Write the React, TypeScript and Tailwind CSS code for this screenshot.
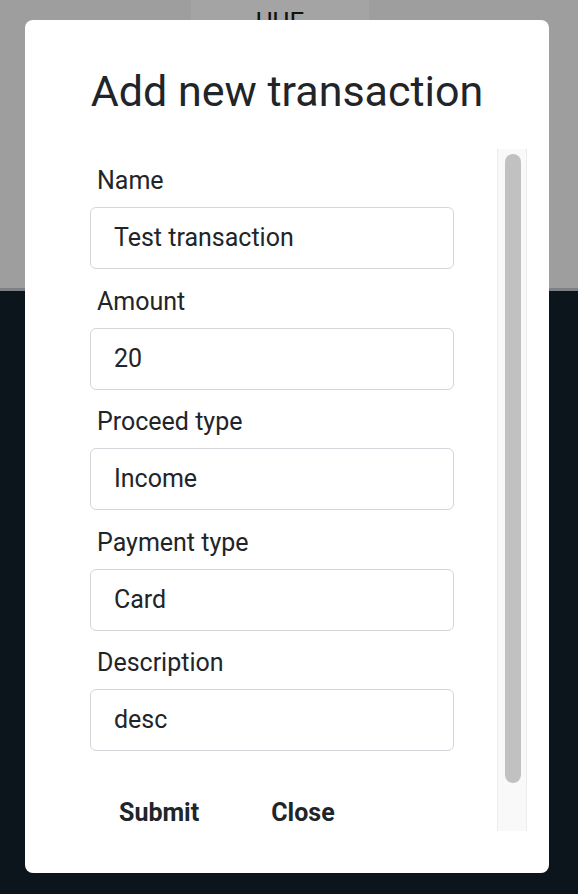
const FIELDS = [
  { label: "Name", value: "Test transaction" },
  { label: "Amount", value: "20" },
  { label: "Proceed type", value: "Income" },
  { label: "Payment type", value: "Card" },
  { label: "Description", value: "desc" },
];

function Field({ label, value }: { label: string; value: string }) {
  return (
    <div className="flex flex-col">
      <label className="pl-[7px] text-[25px] leading-[36px] text-[#212529]">
        {label}
      </label>
      <div className="mt-[8px] flex h-[62px] w-[364px] items-center rounded-[6px] border border-[#d3d6db] bg-white pl-[23px] text-[25px] text-[#212529]">
        {value}
      </div>
    </div>
  );
}

export default function App() {
  return (
    <div
      className="relative h-[894px] w-[578px] overflow-hidden"
      style={{ fontFamily: "Roboto, 'Liberation Sans', sans-serif" }}
    >
      <div className="flex h-full flex-col">
        <div className="flex h-[291px] justify-center border-b-[3px] border-[#7d8084] bg-[#9d9e9d]">
          <div className="ml-[-18px] flex h-[60px] w-[178px] justify-center bg-[#a3a4a3] pt-[4px]">
            <span className="text-[26px] leading-[36px] text-[#111]">UUE</span>
          </div>
        </div>
        <div className="flex-1 bg-[#0c141c]" />
      </div>

      <div className="absolute left-[25px] top-[20px] flex h-[853px] w-[524px] flex-col rounded-[8px] bg-white">
        <h1 className="pt-[45px] text-center text-[43px] leading-[52px] text-[#212529]">
          Add new transaction
        </h1>

        <div className="ml-[65px] mt-[32px] flex h-[682px] w-[437px]">
          <div className="flex flex-1 flex-col overflow-hidden pt-[14px]">
            <div className="flex flex-col gap-[14.5px]">
              {FIELDS.map((f) => (
                <Field key={f.label} label={f.label} value={f.value} />
              ))}
            </div>
            <div className="mt-[35px] flex items-center gap-[36px] pl-[11px]">
              <button className="px-[18px] py-[9px] text-[25px] font-bold leading-[36px] text-[#212529]">
                Submit
              </button>
              <button className="px-[18px] py-[9px] text-[25px] font-bold leading-[36px] text-[#212529]">
                Close
              </button>
            </div>
          </div>
          <div className="flex w-[30px] border-x border-[#ececec] bg-[#f9f9f9] pl-[7px] pt-[5px]">
            <div className="h-[629px] w-[16px] rounded-full bg-[#c1c1c1]" />
          </div>
        </div>
      </div>
    </div>
  );
}
